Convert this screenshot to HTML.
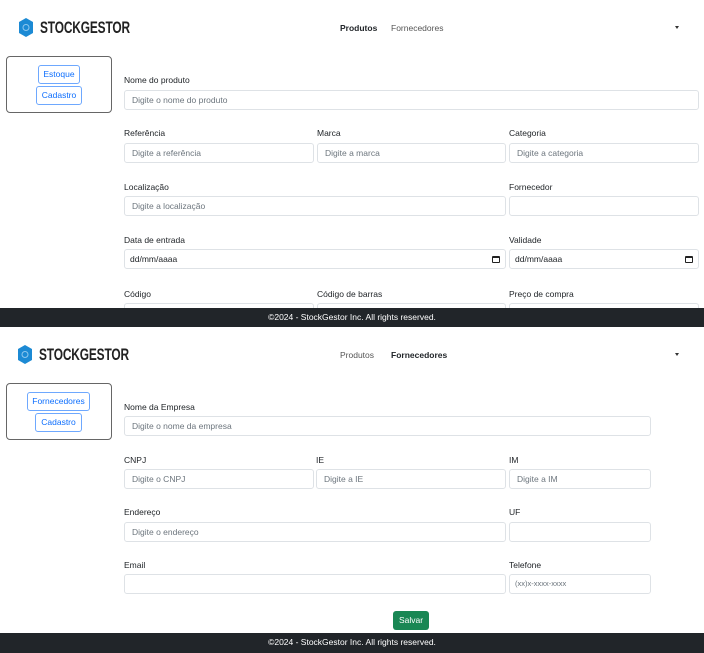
<!DOCTYPE html>
<html><head><meta charset="utf-8"><style>
*{box-sizing:border-box;margin:0;padding:0}
body{width:704px;height:653px;position:relative;overflow:hidden;background:#fff;font-family:"Liberation Sans",sans-serif;font-size:8.5px;color:#212529}
.a{position:absolute}
.lbl{position:absolute;font-size:8.5px;color:#212529;line-height:10px}
.in{position:absolute;height:20px;border:1px solid #dee2e6;border-radius:3px;color:#6c757d;font-size:8.5px;line-height:18px;padding-left:7px;background:#fff}
.logo{position:absolute;font-weight:bold;font-size:17px;letter-spacing:-0.2px;transform:scaleX(0.7);transform-origin:left center;color:#222;line-height:18px}
.side{position:absolute;left:6px;width:106px;height:57px;border:1px solid #666;border-radius:4px}
.btn{position:absolute;border:1px solid #6ea8fe;border-radius:3px;color:#0d6efd;font-size:8.5px;text-align:center;line-height:17px;height:19px}
.foot{position:absolute;left:0;width:704px;height:19px;background:#212529;color:#fff;text-align:center;font-size:8.5px;line-height:19px}
.cal{position:absolute;right:5px;top:6px;width:8px;height:7px;border:1px solid #222;border-top-width:2px;border-radius:1px}
</style></head><body>
<svg class="a" style="left:19px;top:18px" width="14" height="19" viewBox="0 0 14 19"><polygon points="7,0 14,4 14,15 7,19 0,15 0,4" fill="#1c8ad4"/><circle cx="7" cy="9.5" r="3" fill="none" stroke="#8fc8ee" stroke-width="1"/></svg>
<div class="logo" style="left:40px;top:19px">STOCKGESTOR</div>
<div class="a" style="left:340px;top:23px;font-weight:bold">Produtos</div>
<div class="a" style="left:391px;top:23px;color:#555">Fornecedores</div>
<div class="a" style="left:675px;top:26px;border-left:2.5px solid transparent;border-right:2.5px solid transparent;border-top:3px solid #333"></div>
<div class="side" style="top:56px"></div>
<div class="btn" style="left:38px;top:65px;width:42px">Estoque</div>
<div class="btn" style="left:36px;top:86px;width:46px">Cadastro</div>
<div class="lbl" style="left:124px;top:75px">Nome do produto</div>
<div class="in" style="left:124px;top:90px;width:575px">Digite o nome do produto</div>
<div class="lbl" style="left:124px;top:128px">Referência</div>
<div class="lbl" style="left:317px;top:128px">Marca</div>
<div class="lbl" style="left:509px;top:128px">Categoria</div>
<div class="in" style="left:124px;top:143px;width:190px">Digite a referência</div>
<div class="in" style="left:317px;top:143px;width:189px">Digite a marca</div>
<div class="in" style="left:509px;top:143px;width:190px">Digite a categoria</div>
<div class="lbl" style="left:124px;top:182px">Localização</div>
<div class="lbl" style="left:509px;top:182px">Fornecedor</div>
<div class="in" style="left:124px;top:196px;width:382px">Digite a localização</div>
<div class="in" style="left:509px;top:196px;width:190px"></div>
<div class="lbl" style="left:124px;top:235px">Data de entrada</div>
<div class="lbl" style="left:509px;top:235px">Validade</div>
<div class="in" style="left:124px;top:249px;width:382px;color:#212529;padding-left:5px">dd/mm/aaaa<div class="cal"></div></div>
<div class="in" style="left:509px;top:249px;width:190px;color:#212529;padding-left:5px">dd/mm/aaaa<div class="cal"></div></div>
<div class="lbl" style="left:124px;top:289px">Código</div>
<div class="lbl" style="left:317px;top:289px">Código de barras</div>
<div class="lbl" style="left:509px;top:289px">Preço de compra</div>
<div class="in" style="left:124px;top:303px;width:190px"></div>
<div class="in" style="left:317px;top:303px;width:189px"></div>
<div class="in" style="left:509px;top:303px;width:190px"></div>
<div class="foot" style="top:308px">©2024 - StockGestor Inc. All rights reserved.</div>

<div class="a" style="left:0;top:327px;width:704px;height:306px;background:#fff"></div>
<svg class="a" style="left:18px;top:345px" width="14" height="19" viewBox="0 0 14 19"><polygon points="7,0 14,4 14,15 7,19 0,15 0,4" fill="#1c8ad4"/><circle cx="7" cy="9.5" r="3" fill="none" stroke="#8fc8ee" stroke-width="1"/></svg>
<div class="logo" style="left:39px;top:346px">STOCKGESTOR</div>
<div class="a" style="left:340px;top:350px;color:#555">Produtos</div>
<div class="a" style="left:391px;top:350px;font-weight:bold">Fornecedores</div>
<div class="a" style="left:675px;top:353px;border-left:2.5px solid transparent;border-right:2.5px solid transparent;border-top:3px solid #333"></div>
<div class="side" style="top:383px"></div>
<div class="btn" style="left:27px;top:392px;width:63px">Fornecedores</div>
<div class="btn" style="left:35px;top:413px;width:47px">Cadastro</div>
<div class="lbl" style="left:124px;top:402px">Nome da Empresa</div>
<div class="in" style="left:124px;top:416px;width:527px">Digite o nome da empresa</div>
<div class="lbl" style="left:124px;top:455px">CNPJ</div>
<div class="lbl" style="left:316px;top:455px">IE</div>
<div class="lbl" style="left:509px;top:455px">IM</div>
<div class="in" style="left:124px;top:469px;width:190px">Digite o CNPJ</div>
<div class="in" style="left:316px;top:469px;width:190px">Digite a IE</div>
<div class="in" style="left:509px;top:469px;width:142px">Digite a IM</div>
<div class="lbl" style="left:124px;top:507px">Endereço</div>
<div class="lbl" style="left:509px;top:507px">UF</div>
<div class="in" style="left:124px;top:522px;width:382px">Digite o endereço</div>
<div class="in" style="left:509px;top:522px;width:142px"></div>
<div class="lbl" style="left:124px;top:560px">Email</div>
<div class="lbl" style="left:509px;top:560px">Telefone</div>
<div class="in" style="left:124px;top:574px;width:382px"></div>
<div class="in" style="left:509px;top:574px;width:142px;font-size:7.5px;padding-left:5px">(xx)x-xxxx-xxxx</div>
<div class="a" style="left:393px;top:611px;width:36px;height:19px;background:#198754;border-radius:3px;color:#fff;text-align:center;line-height:19px">Salvar</div>
<div class="foot" style="top:633px;height:20px">©2024 - StockGestor Inc. All rights reserved.</div>
</body></html>
